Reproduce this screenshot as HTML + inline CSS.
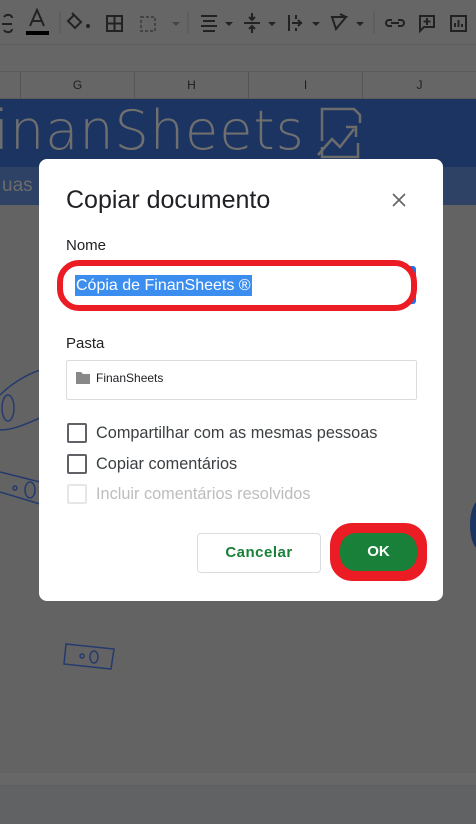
<!DOCTYPE html>
<html><head><meta charset="utf-8"><style>
*{margin:0;padding:0;box-sizing:border-box}
body{width:476px;height:824px;overflow:hidden;background:#636363;font-family:"Liberation Sans",Arial,sans-serif;position:relative}
.abs{position:absolute}
.tb{left:0;top:0;width:476px;height:45px;background:#666;border-bottom:1px solid #5c5c5c}
.fb{left:0;top:45px;width:476px;height:27px;background:#666;border-bottom:1px solid #5a5a5a}
.ch{left:0;top:72px;width:476px;height:27px;background:#666;border-bottom:1px solid #5a5a5a;font-size:12px;color:#1f1f1f}
.ch div{position:absolute;top:0;height:27px;line-height:27px;text-align:center;border-left:1px solid #555}
.ban{left:0;top:99px;width:476px;height:68px;background:#1c3461}
.sub{left:0;top:167px;width:476px;height:38px;background:#2e4266}
.dlg{left:39px;top:159px;width:404px;height:442px;background:#fff;border-radius:8px}
.lbl{font-size:15px;color:#202124}
.cb{width:20px;height:20px;border:2px solid #5f6368;border-radius:2px}
.ct{font-size:16.3px;color:#3c4043}
</style></head><body>
<div class="abs tb">
<svg width="476" height="45" style="position:absolute;left:0;top:0" fill="none" stroke="#222" stroke-width="2">
<path d="M2 24h10M4 17c2-3 8-3 8 1M4 30c2 3 8 3 8-1"/>
<path d="M30 26l7-16 7 16M32 21h10"/><rect x="26" y="31" width="23" height="4" fill="#000" stroke="none"/>
<line x1="60" y1="12" x2="60" y2="34" stroke="#555" stroke-width="1"/>
<path d="M74 15l7 7-6 6-7-7zM74 15l-2-2" /><circle cx="88" cy="26" r="2" fill="#222" stroke="none"/>
<rect x="107" y="16" width="15" height="15"/><path d="M114.5 16v15M107 23.5h15"/>
<path d="M141 17h14v14h-14z" stroke="#444" stroke-dasharray="3 2"/><path d="M172 22l4 4 4-4" fill="#444" stroke="none"/>
<line x1="188" y1="12" x2="188" y2="34" stroke="#555" stroke-width="1"/>
<path d="M201 16h16M203 21h12M201 26h16M203 31h12"/><path d="M225 22l4 4 4-4z" fill="#222" stroke="none"/>
<path d="M244 23h16M252 13v7M249 17l3 3 3-3M252 33v-7M249 29l3-3 3 3"/><path d="M268 22l4 4 4-4z" fill="#222" stroke="none"/>
<path d="M289 15v16M292 23h10M298 20l3 3-3 3M296 15v4M296 28v3"/><path d="M312 22l4 4 4-4z" fill="#222" stroke="none"/>
<path d="M332 17l14 0-10 12zM346 17l-6-3"/><path d="M356 22l4 4 4-4z" fill="#222" stroke="none"/>
<line x1="374" y1="12" x2="374" y2="34" stroke="#555" stroke-width="1"/>
<path d="M392 20h-3a3 3 0 000 6h3M398 20h3a3 3 0 010 6h-3M391 23h8"/>
<path d="M420 16h14v11h-10l-4 4z"/><path d="M427 18v7M423.5 21.5h7"/>
<rect x="451" y="16" width="15" height="15"/><path d="M455 27v-4M458.5 27v-7M462 27v-3"/>
</svg></div>
<div class="abs fb"></div>
<div class="abs ch">
<div style="left:20px;width:114px">G</div><div style="left:134px;width:114px">H</div><div style="left:248px;width:114px">I</div><div style="left:362px;width:114px">J</div>
</div>
<div class="abs ban"><div style="position:absolute;left:-6px;top:0px;font-size:54px;color:#6f6f6f;letter-spacing:1px;font-family:'DejaVu Sans',sans-serif;font-weight:200">inanSheets</div>
<svg width="50" height="52" style="position:absolute;left:316px;top:8px" fill="none" stroke="#6c6c6c" stroke-width="2.5"><path d="M6 34V2h32l6 6v8M6 40v10h36V36"/><path d="M2 48l14-16 8 8 14-18M30 20h10v10"/></svg></div>
<div class="abs sub"><div style="position:absolute;left:2px;top:8px;font-size:19px;color:#6c6c6c">uas</div></div>
<svg class="abs" style="left:0;top:370px" width="50" height="280" fill="none" stroke="#243a6e" stroke-width="1.5">
<path d="M0 25c10-10 25-20 40-25M0 60c15 0 30-8 40-12"/><ellipse cx="8" cy="38" rx="6" ry="13"/>
<path d="M0 102l40 10M0 122l40 12"/><circle cx="15" cy="118" r="2"/><ellipse cx="30" cy="120" rx="5" ry="8"/>
</svg>
<svg class="abs" style="left:62px;top:640px" width="56" height="32" fill="none" stroke="#243a6e" stroke-width="1.5"><path d="M4 4l48 5-3 20-47-5z"/><circle cx="20" cy="16" r="2"/><ellipse cx="32" cy="17" rx="4" ry="6"/></svg>
<div class="abs" style="left:470px;top:500px;width:20px;height:50px;border-radius:50%;background:#1c3461"></div>
<div class="abs dlg">
<div class="abs" style="left:27px;top:27px;font-size:25px;color:#202124">Copiar documento</div>
<svg class="abs" style="left:353px;top:34px" width="14" height="14" stroke="#5f6368" stroke-width="1.6"><path d="M1 1l12 12M13 1L1 13"/></svg>
<div class="abs lbl" style="left:27px;top:78px">Nome</div>
<div class="abs" style="left:371px;top:107px;width:6px;height:38px;background:#1a73e8;border-radius:0 3px 3px 0"></div>
<div class="abs" style="left:18px;top:101px;width:360px;height:51px;border:6px solid #ec1c24;border-radius:22px;background:#fff"></div>
<div class="abs" style="left:36px;top:116px;height:21px;background:#3b8ef0;color:#fff;font-size:16px;line-height:21px;padding:0 1px">Cópia de FinanSheets ®</div>
<div class="abs lbl" style="left:27px;top:176px">Pasta</div>
<div class="abs" style="left:27px;top:201px;width:351px;height:40px;border:1px solid #dadce0;border-radius:2px"></div>
<svg class="abs" style="left:37px;top:213px" width="14" height="12"><path d="M0 0h5l2 2h7v10H0z" fill="#888"/></svg>
<div class="abs" style="left:57px;top:212px;font-size:12px;color:#202124">FinanSheets</div>
<div class="abs cb" style="left:28px;top:264px"></div><div class="abs ct" style="left:57px;top:265px">Compartilhar com as mesmas pessoas</div>
<div class="abs cb" style="left:28px;top:295px"></div><div class="abs ct" style="left:57px;top:296px">Copiar comentários</div>
<div class="abs cb" style="left:28px;top:325px;border-color:#e6e6e6"></div><div class="abs ct" style="left:57px;top:326px;color:#bdbdbd">Incluir comentários resolvidos</div>
<div class="abs" style="left:158px;top:374px;width:124px;height:40px;border:1px solid #dadce0;border-radius:4px;color:#188038;font-size:15px;font-weight:bold;text-align:center;line-height:38px;letter-spacing:.5px">Cancelar</div>
<div class="abs" style="left:291px;top:364px;width:97px;height:58px;background:#ec1c24;border-radius:22px"></div>
<div class="abs" style="left:301px;top:374px;width:77px;height:38px;background:#188038;border-radius:16px;color:#fff;font-size:15px;font-weight:bold;text-align:center;line-height:38px">OK</div>
</div>
<div class="abs" style="left:0;top:773px;width:476px;height:13px;background:#676767;border-bottom:1px solid #5c5c5c"></div>
<div class="abs" style="left:0;top:786px;width:476px;height:38px;background:#616264"></div>
</body></html>
